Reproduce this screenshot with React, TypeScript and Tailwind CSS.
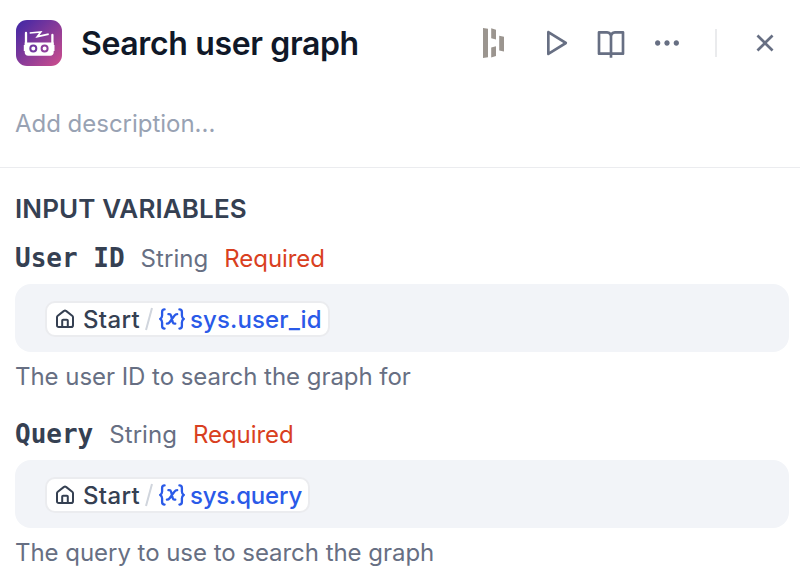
import { RiBookOpenLine, RiCloseLine, RiMoreFill, RiPlayLargeLine } from 'react-icons/ri'

function RobotLogo() {
  return (
    <svg className="size-[46px] shrink-0" viewBox="0 0 46 46" fill="none">
      <defs>
        <linearGradient id="logo" x1="2" y1="2" x2="44" y2="44" gradientUnits="userSpaceOnUse">
          <stop stopColor="#4428a5" />
          <stop offset="1" stopColor="#c84c8d" />
        </linearGradient>
      </defs>
      <rect width="46" height="46" rx="11" fill="url(#logo)" />
      <path d="M10 13V25M36.400 15V25" stroke="#fff" strokeWidth="2.300" strokeLinecap="round" />
      <path
        d="M8.700 22.600h29v2.300h.8v6h-.8v1.400c0 2.200-1.300 3.500-3.500 3.500H12.200c-2.200 0-3.500-1.300-3.500-3.500v-1.400h-.9v-6h.9z"
        fill="#fff"
      />
      <circle cx="17.3" cy="28.6" r="3" stroke="#7338a0" strokeWidth="2" />
      <circle cx="28.6" cy="28.6" r="3" stroke="#8f3f9b" strokeWidth="2" />
      <path d="M13.700 13 24.700 12 21.300 16.700 32.700 14.200" stroke="#fff" strokeWidth="1.7" strokeLinejoin="miter" />
    </svg>
  )
}

function BarsMark() {
  return (
    <svg className="h-[30px] w-[22px]" viewBox="0 0 22 30" fill="#9b958f">
      <path d="M0 0 5 .8V29.200L0 30zM8.200 .3 13 1.800V11.500L8.200 10.300zM8.200 19.500 13 18.300V28L8.200 29.500zM16.200 7.800 21 8.800V23.600L16.200 22.400z" />
    </svg>
  )
}

function HomeIcon() {
  return (
    <svg className="h-5 w-[18px] shrink-0" viewBox="0 0 18 20" fill="none" stroke="#354052" strokeWidth="2" strokeLinejoin="round" strokeLinecap="round">
      <path d="M1 8.3c0-.7.3-1.2.8-1.6L8 1.9c.6-.5 1.4-.5 2 0l6.200 4.800c.5.4.8.9.8 1.600V16.300c0 1.100-.7 1.800-1.800 1.800H2.800C1.700 18.100 1 17.400 1 16.300z" />
      <path d="M6.200 18v-6.400c0-.6.300-.9.900-.9h3.800c.6 0 .9.300.9.900V18" />
    </svg>
  )
}

function VariableIcon() {
  return (
    <svg className="h-[22px] w-[26px] shrink-0" viewBox="0 0 26 22" fill="none" stroke="#2a5ae8" strokeWidth="2.300" strokeLinecap="round" strokeLinejoin="round">
      <path d="M5.600 1.400C3.800 1.400 3.100 2.300 3.100 4v3.600c0 1.700-.6 2.700-1.900 3.400 1.300.7 1.900 1.700 1.900 3.400V18c0 1.700.7 2.600 2.500 2.600" />
      <path d="M20.400 1.400c1.800 0 2.500.9 2.500 2.600v3.600c0 1.700.6 2.700 1.900 3.400-1.300.7-1.900 1.700-1.900 3.400V18c0 1.700-.7 2.600-2.500 2.600" />
      <path d="M9.400 6.200h.8c1 0 1.600.5 1.900 1.600l1.600 6.300c.3 1.100.9 1.600 1.800 1.600h.8M18.200 6.200c-1.200 0-2 .4-2.700 1.400l-4.900 6.700c-.7 1-1.500 1.400-2.700 1.400" />
    </svg>
  )
}

type FieldProps = { label: string; value: string; valueClass: string; hint: string }

function VariableField({ label, value, valueClass, hint }: FieldProps) {
  return (
    <section className="h-[176px]">
      <div className="flex h-[60px] items-center pt-[10px] leading-8 whitespace-nowrap">
        <span className="pb-[2px] font-['DejaVu_Sans_Mono',monospace] text-[26px] font-bold text-[#354052]">{label}</span>
        <span className="ml-4 text-2xl tracking-[0.05px] text-[#676f83]">String</span>
        <span className="ml-4 text-2xl tracking-[-0.05px] text-[#d93f21]">Required</span>
      </div>
      <div className="flex h-[68px] items-center rounded-2xl bg-[#f2f4f8] pt-[2px] pl-[30px]">
        <div className="flex h-[36px] items-center rounded-[10px] border-2 border-[#ebecef] bg-white pr-1.5 pl-[9px] text-2xl font-medium whitespace-nowrap">
          <HomeIcon />
          <span className="ml-[9px] pt-[2px] tracking-[0.35px] text-[#354052]">Start</span>
          <svg className="mr-[6px] ml-[5px] h-6 w-2" viewBox="0 0 8 24" stroke="#d0d5dd" strokeWidth="2">
            <path d="M7 1 1 23" />
          </svg>
          <VariableIcon />
          <span className={`ml-[5px] pt-[2px] text-[#2a5ae8] ${valueClass}`}>{value}</span>
        </div>
      </div>
      <p className="pt-[9px] text-2xl leading-8 tracking-[-0.04px] text-[#676f83]">{hint}</p>
    </section>
  )
}

export default function App() {
  return (
    <main className="h-[582px] w-[800px] overflow-hidden bg-white font-['Inter',sans-serif]">
      <header className="h-[168px] border-b border-[#ebecef]">
        <div className="flex h-[86px] items-center pl-4">
          <RobotLogo />
          <h1 className="ml-[19px] w-[402px] pt-[2px] text-[32px] leading-10 font-semibold tracking-[-0.36px] text-[#101828]">Search user graph</h1>
          <BarsMark />
          <div className="ml-[34px] flex items-center gap-6 text-[32px] text-[#676f83]">
            <RiPlayLargeLine />
            <RiBookOpenLine />
            <RiMoreFill />
          </div>
          <div className="ml-8 h-7 w-[2px] bg-[#eaebed]" />
          <RiCloseLine className="ml-8 text-[32px] text-[#676f83]" />
        </div>
        <p className="pt-[22px] pl-[15px] text-2xl leading-8 tracking-[-0.02px] text-[#98a2b3]">Add description...</p>
      </header>
      <div className="pt-6 pr-[11px] pl-[15px]">
        <h2 className="h-8 text-[26px] leading-[34px] font-semibold tracking-[0.12px] text-[#354052]">INPUT VARIABLES</h2>
        <VariableField label="User ID" value="sys.user_id" valueClass="tracking-[0.12px]" hint="The user ID to search the graph for" />
        <VariableField label="Query" value="sys.query" valueClass="tracking-[-0.2px]" hint="The query to use to search the graph" />
      </div>
    </main>
  )
}
